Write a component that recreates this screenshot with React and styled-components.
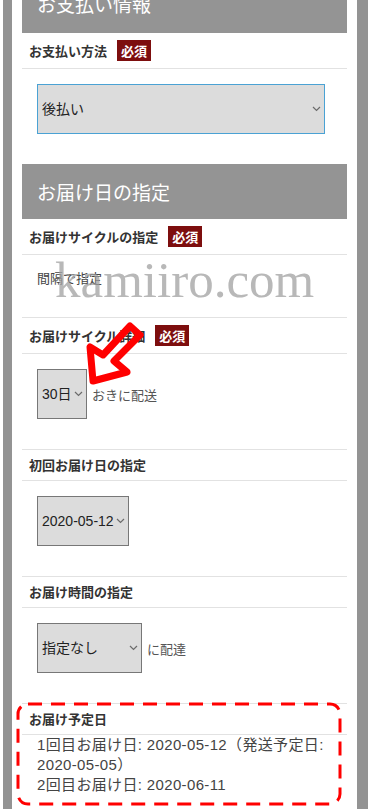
import React from "react"
import styled, { createGlobalStyle } from "styled-components"

const GlobalStyle = createGlobalStyle`
  html, body {
    margin: 0;
    padding: 0;
    background: #ffffff;
    overflow: hidden;
  }
  body {
    font-family: "Liberation Sans", "Noto Sans CJK JP", sans-serif;
    color: #333;
  }
`

function Chevron() {
  return (
    <svg width="9" height="6" viewBox="0 0 9 6">
      <polyline points="1,1 4.5,4.5 8,1" fill="none" stroke="#6b6b6b" strokeWidth="1.2" />
    </svg>
  )
}

function Select({ children, width, focused }) {
  return (
    <SelectBox $width={width} $focused={focused}>
      <SelectText>{children}</SelectText>
      <Chevron />
    </SelectBox>
  )
}

function Arrow() {
  return (
    <ArrowSvg width="75" height="75" viewBox="0 0 75 75">
      <path
        d="M13 29 L16 63 L50 54 L37 43 L63 17 L53 8 L26 37 Z"
        fill="none"
        stroke="#ff0000"
        strokeWidth="7"
        strokeLinejoin="round"
        strokeLinecap="round"
      />
    </ArrowSvg>
  )
}

function DashedFrame() {
  return (
    <DashSvg width="328" height="104" viewBox="0 0 328 104">
      <rect
        x="2"
        y="2"
        width="322"
        height="100"
        rx="10"
        fill="none"
        stroke="#ff0000"
        strokeWidth="3"
        strokeDasharray="14 9"
      />
    </DashSvg>
  )
}

export default function App() {
  return (
    <>
      <GlobalStyle />
      <Outer>
        <Frame>
          <Content>
            <SectionHeader $first>お支払い情報</SectionHeader>
            <Field>
              <LabelRow>
                <Label>お支払い方法</Label>
                <Badge>必須</Badge>
              </LabelRow>
              <Body $flat>
                <Select width="288px" focused>後払い</Select>
              </Body>
            </Field>

            <SectionHeader>お届け日の指定</SectionHeader>
            <Field>
              <LabelRow>
                <Label>お届けサイクルの指定</Label>
                <Badge>必須</Badge>
              </LabelRow>
              <TextBody>
                <Plain>間隔で指定</Plain>
                <Watermark>kamiiro.com</Watermark>
              </TextBody>
            </Field>

            <Field>
              <LabelRow>
                <Label>お届けサイクル詳細</Label>
                <Badge>必須</Badge>
              </LabelRow>
              <Body>
                <Inline>
                  <Select width="50px">30日</Select>
                  <Suffix>おきに配送</Suffix>
                </Inline>
              </Body>
              <Arrow />
            </Field>

            <Field>
              <LabelRow>
                <Label>初回お届け日の指定</Label>
              </LabelRow>
              <Body>
                <Select width="92px">2020-05-12</Select>
              </Body>
            </Field>

            <Field>
              <LabelRow>
                <Label>お届け時間の指定</Label>
              </LabelRow>
              <Body>
                <Inline>
                  <Select width="105px">指定なし</Select>
                  <Suffix>に配達</Suffix>
                </Inline>
              </Body>
            </Field>

            <Field>
              <LabelRow>
                <Label>お届け予定日</Label>
              </LabelRow>
              <ScheduleBody>
                <ScheduleLine>1回目お届け日: 2020-05-12（発送予定日: 2020-05-05）</ScheduleLine>
                <ScheduleLine>2回目お届け日: 2020-06-11</ScheduleLine>
              </ScheduleBody>
              <DashedFrame />
            </Field>
          </Content>
        </Frame>
      </Outer>
    </>
  )
}

const Outer = styled.div`
  padding: 0 6px 0 3px;
  margin-top: -22px;
`

const Frame = styled.div`
  border-left: 9px solid #939393;
  border-right: 11px solid #939393;
  padding: 0 10px;
  min-height: 860px;
  background: #fff;
`

const Content = styled.div`
  display: flex;
  flex-direction: column;
`

const SectionHeader = styled.h2`
  margin: 0;
  height: 55px;
  display: flex;
  align-items: center;
  padding: ${(p) => (p.$first ? "0 15px 4px" : "0 15px")};
  box-sizing: border-box;
  background: #949494;
  color: #ffffff;
  font-family: "Noto Sans CJK JP", sans-serif;
  font-size: 19px;
  font-weight: 400;
  line-height: 1;
`

const Field = styled.div`
  position: relative;
`

const LabelRow = styled.div`
  display: flex;
  align-items: center;
  gap: 10px;
  padding: 7px 7px;
  border-bottom: 1px solid #e2e2e2;
`

const Label = styled.span`
  font-family: "Noto Sans CJK JP", sans-serif;
  font-size: 13px;
  font-weight: 700;
  color: #333;
  line-height: 16px;
`

const Badge = styled.span`
  display: inline-flex;
  align-items: center;
  height: 21px;
  padding: 0 4px;
  background: #7d0e0e;
  color: #fff;
  font-family: "Noto Sans CJK JP", sans-serif;
  font-size: 13px;
  font-weight: 700;
  line-height: 1;
`

const Body = styled.div`
  padding: 15px 15px 30px;
  border-bottom: ${(p) => (p.$flat ? "none" : "1px solid #e2e2e2")};
`

const TextBody = styled.div`
  position: relative;
  padding: 13px 15px 29px;
  border-bottom: 1px solid #e2e2e2;
`

const Plain = styled.div`
  font-family: "Noto Sans CJK JP", sans-serif;
  font-size: 13px;
  line-height: 20px;
  color: #444;
`

const Watermark = styled.div`
  position: absolute;
  left: 33px;
  top: 0;
  font-family: "Liberation Serif", serif;
  font-size: 51px;
  line-height: 50px;
  color: rgba(160, 160, 160, 0.75);
  pointer-events: none;
`

const Inline = styled.div`
  display: flex;
  align-items: center;
  gap: 5px;
`

const SelectBox = styled.div`
  box-sizing: border-box;
  width: ${(p) => p.$width};
  height: 50px;
  display: flex;
  align-items: center;
  justify-content: space-between;
  padding: 0 3px 0 4px;
  background: #dcdcdc;
  border: 1px solid ${(p) => (p.$focused ? "#4aa2d4" : "#777777")};
`

const SelectText = styled.span`
  font-size: 14px;
  color: #222;
  white-space: nowrap;
  line-height: 1;
`

const Suffix = styled.span`
  font-family: "Noto Sans CJK JP", sans-serif;
  font-size: 13px;
  color: #555;
  line-height: 1;
`

const ScheduleBody = styled.div`
  padding: 0 12px 10px 15px;
`

const ScheduleLine = styled.div`
  font-size: 15px;
  line-height: 20px;
  letter-spacing: 0.35px;
  color: #444;
`

const ArrowSvg = styled.svg`
  position: absolute;
  left: 55px;
  top: 0;
  pointer-events: none;
`

const DashSvg = styled.svg`
  position: absolute;
  left: -6px;
  top: -2px;
  pointer-events: none;
`
